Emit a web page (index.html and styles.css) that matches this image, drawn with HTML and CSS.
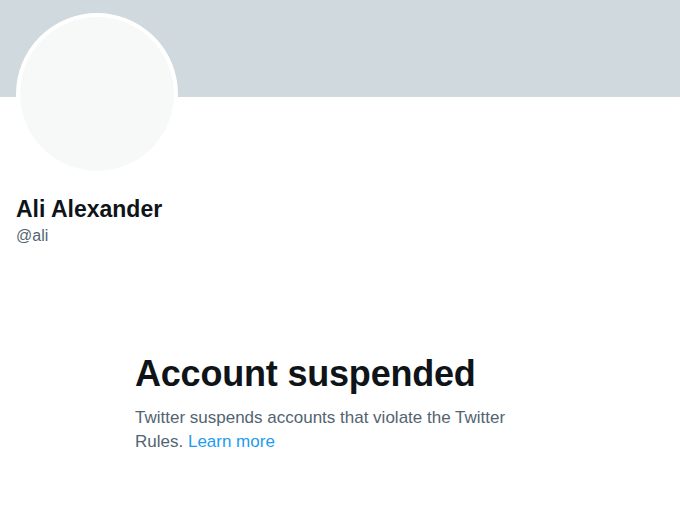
FILE: index.html
```html
<!DOCTYPE html>
<html lang="en">
<head>
    <meta charset="UTF-8">
    <meta name="viewport" content="width=device-width, initial-scale=1.0">
    <title>Ali Alexander (@ali)</title>
    <link rel="stylesheet" href="styles.css">
</head>
<body>
    <div class="banner"></div>
    <div class="profile">
        <div class="avatar"></div>
        <div class="name">Ali Alexander</div>
        <div class="handle">@ali</div>
    </div>
    <div class="suspended">
        <h1>Account suspended</h1>
        <p>Twitter suspends accounts that violate the Twitter Rules. <a href="#">Learn more</a></p>
    </div>
</body>
</html>
```

FILE: styles.css
```css
/* Profilo sospeso */
body {
    font-family: 'Liberation Sans', Arial, sans-serif;
    color: #0f1419;
    background-color: #fff;
    margin: 0;
    padding: 0;
}

.banner {
    height: 97px;
    background-color: #cfd9de;
}

.profile {
    padding: 0 16px;
}

.avatar {
    width: 162px;
    height: 162px;
    margin-top: -84px;
    box-sizing: border-box;
    border: 4px solid #fff;
    border-radius: 50%;
    background-color: #f7f9f9;
}

.name {
    margin-top: 21px;
    font-size: 23px;
    line-height: 26px;
    font-weight: bold;
}

.handle {
    margin-top: 4px;
    font-size: 16px;
    line-height: 20px;
    color: #536471;
}

.suspended {
    width: 400px;
    margin: 106px 0 0 135px;
}

.suspended h1 {
    margin: 0;
    font-size: 36px;
    line-height: 44px;
    font-weight: 800;
    letter-spacing: -0.2px;
}

.suspended p {
    margin: 10px 0 0;
    font-size: 17px;
    line-height: 24px;
    color: #536471;
}

.suspended a {
    color: #1d9bf0;
    text-decoration: none;
}
```
